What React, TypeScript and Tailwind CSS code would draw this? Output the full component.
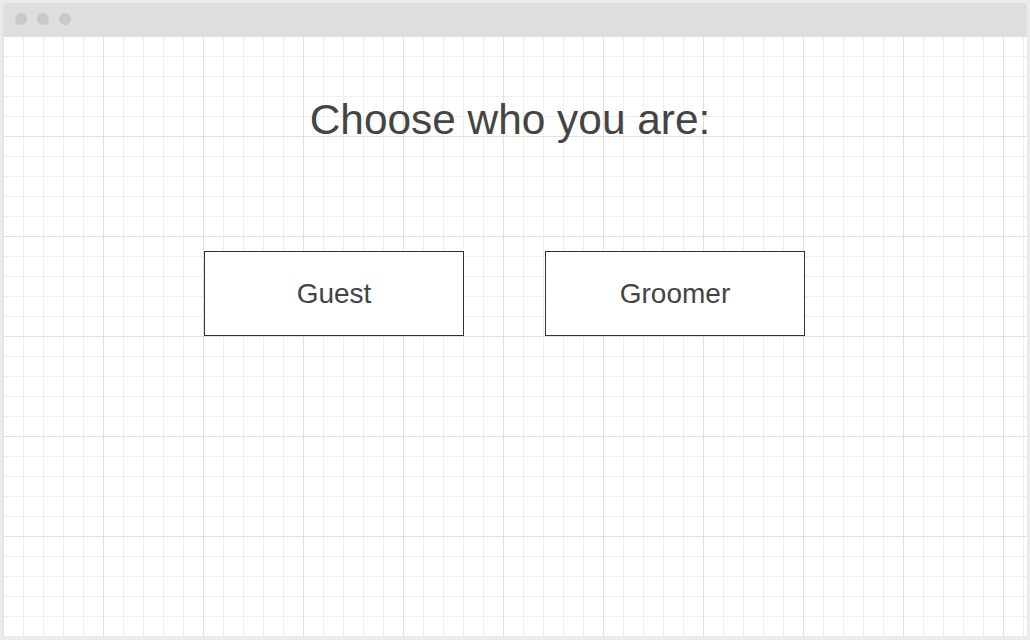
import React from 'react';

const roles = ['Guest', 'Groomer'];

const App = () => {
    return (
        <div className="w-[1030px] h-[640px] bg-[#ebebeb] px-[3px] pt-[3px] pb-[4px] font-['Liberation_Sans',Arial,sans-serif]">
            {/* Window title bar */}
            <div className="h-[33px] bg-[#dedede] rounded-t-[5px] flex items-center gap-[10px] pl-[12px] pb-[1px]">
                <span className="w-[12px] h-[12px] rounded-full bg-[#c9c9c9]" />
                <span className="w-[12px] h-[12px] rounded-full bg-[#c9c9c9]" />
                <span className="w-[12px] h-[12px] rounded-full bg-[#c9c9c9]" />
            </div>

            {/* Grid canvas */}
            <div className="h-[600px] bg-white bg-[linear-gradient(to_right,#e0e0e0_1px,transparent_1px),linear-gradient(to_bottom,#e0e0e0_1px,transparent_1px),linear-gradient(to_right,#efefef_1px,transparent_1px),linear-gradient(to_bottom,#efefef_1px,transparent_1px)] [background-size:100px_100px,100px_100px,20px_20px,20px_20px]">
                <h1 className="pt-[63px] pr-[10px] text-center text-[42.4px] leading-none text-[#444444]">
                    Choose who you are:
                </h1>

                <div className="flex gap-[81px] pl-[201px] mt-[110px]">
                    {roles.map(role => (
                        <button
                            key={role}
                            className="w-[260px] h-[85px] bg-white border border-[#333333] text-[28px] text-[#444444] flex items-center justify-center"
                        >
                            {role}
                        </button>
                    ))}
                </div>
            </div>
        </div>
    );
};

export default App;
